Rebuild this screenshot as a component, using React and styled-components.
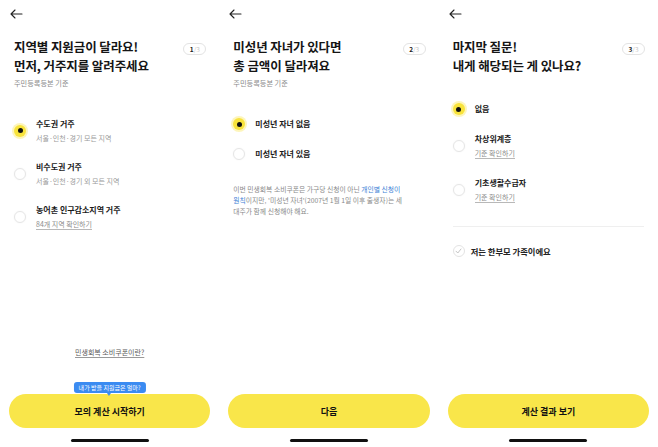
import React from "react";
import styled, { createGlobalStyle } from "styled-components";

const GlobalStyle = createGlobalStyle`
  body {
    margin: 0;
    background: #fff;
    font-family: "Noto Sans CJK KR", "Noto Sans", sans-serif;
    color: #151515;
  }
`;

const steps = [
  {
    step: 1,
    title: ["지역별 지원금이 달라요!", "먼저, 거주지를 알려주세요"],
    subtitle: "주민등록등본 기준",
    options: [
      { label: "수도권 거주", sub: "서울·인천·경기 모든 지역", checked: true },
      { label: "비수도권 거주", sub: "서울·인천·경기 외 모든 지역" },
      { label: "농어촌 인구감소지역 거주", sub: "84개 지역 확인하기", link: true },
    ],
    button: "모의 계산 시작하기",
  },
  {
    step: 2,
    title: ["미성년 자녀가 있다면", "총 금액이 달라져요"],
    subtitle: "주민등록등본 기준",
    options: [
      { label: "미성년 자녀 없음", checked: true },
      { label: "미성년 자녀 있음" },
    ],
    button: "다음",
  },
  {
    step: 3,
    title: ["마지막 질문!", "내게 해당되는 게 있나요?"],
    options: [
      { label: "없음", checked: true },
      { label: "차상위계층", sub: "기준 확인하기", link: true },
      { label: "기초생활수급자", sub: "기준 확인하기", link: true },
    ],
    button: "계산 결과 보기",
  },
];

const Screens = styled.main`
  display: grid;
  grid-template-columns: repeat(3, 1fr);
  width: 658px;
  height: 447px;
`;

const Panel = styled.section`
  display: flex;
  flex-direction: column;
  height: 447px;
  min-width: 0;
`;

const Header = styled.div`
  height: 28px;
  padding-left: 10px;
  display: flex;
  align-items: center;
`;

const TitleRow = styled.div`
  margin-top: 9px;
  padding: 0 13px 0 14px;
  display: flex;
  justify-content: space-between;
  align-items: flex-start;
`;

const Title = styled.h1`
  margin: 0;
  font-size: 12.5px;
  line-height: 19px;
  font-weight: 700;
  letter-spacing: -0.1px;
`;

const Badge = styled.div`
  margin-top: 6px;
  width: 23px;
  height: 12px;
  box-sizing: border-box;
  border: 1px solid #e3e3e3;
  border-radius: 6px;
  display: flex;
  align-items: center;
  justify-content: center;
  font-size: 6.5px;
  color: #222;
  font-weight: 700;

  span {
    color: #c8c8c8;
    font-weight: 400;
  }
`;

const Subtitle = styled.p`
  margin: 3px 0 0;
  padding-left: 14px;
  font-size: 7.2px;
  line-height: 10px;
  color: #8a8a8a;
`;

const OptionList = styled.div`
  margin-top: ${(p) => p.$top}px;
  padding-left: 14px;
  display: flex;
  flex-direction: column;
  gap: 18px;
`;

const Option = styled.div`
  display: flex;
  align-items: center;
  gap: 10px;
`;

const Radio = styled.span`
  width: 12px;
  height: 12px;
  border-radius: 50%;
  box-sizing: border-box;
  flex-shrink: 0;
  display: flex;
  align-items: center;
  justify-content: center;
  background: ${(p) => (p.$on ? "#f8e33c" : "#fff")};
  border: ${(p) => (p.$on ? "none" : "1px solid #e6e6e6")};
  box-shadow: ${(p) =>
    p.$on ? "0 0 0 2px rgba(248, 227, 60, 0.35)" : "0 0 2px rgba(0,0,0,0.05)"};

  &::after {
    content: "";
    display: ${(p) => (p.$on ? "block" : "none")};
    width: 5px;
    height: 5px;
    border-radius: 50%;
    background: #111;
  }
`;

const OptionText = styled.div`
  display: flex;
  flex-direction: column;
  align-items: flex-start;
`;

const Label = styled.span`
  font-size: 8px;
  line-height: 12px;
  font-weight: 700;
  color: #1a1a1a;
`;

const Sub = styled.span`
  margin-top: 3px;
  font-size: 7px;
  line-height: 10px;
  border-bottom: ${(p) => (p.$link ? "1px solid #b8b8b8" : "none")};
  color: ${(p) => (p.$link ? "#8c8c8c" : "#9a9a9a")};
`;

const Note = styled.p`
  margin: 24px 0 0;
  padding: 0 14px;
  font-size: 6.8px;
  line-height: 11px;
  color: #8a8a8a;
  white-space: nowrap;

  em {
    font-style: normal;
    color: #3d7fd6;
  }
`;

const Divider = styled.hr`
  margin: 23px 14px 0;
  border: none;
  height: 1px;
  background: #efefef;
`;

const CheckRow = styled.div`
  margin-top: 18px;
  padding-left: 14px;
  display: flex;
  align-items: center;
  gap: 6px;
  font-size: 8.3px;
  line-height: 12px;
  font-weight: 700;
  color: #222;
`;

const CheckCircle = styled.span`
  width: 12px;
  height: 12px;
  box-sizing: border-box;
  border: 1px solid #e3e3e3;
  border-radius: 50%;
  display: flex;
  align-items: center;
  justify-content: center;
`;

const Spacer = styled.div`
  flex: 1;
`;

const Footer = styled.div`
  display: flex;
  flex-direction: column;
  align-items: center;
  padding: 0 9px 5px;
`;

const InfoLink = styled.span`
  margin-bottom: 37px;
  font-size: 7px;
  line-height: 10px;
  color: #5a5a5a;
  text-decoration: underline;
  text-underline-offset: 1.5px;
  text-decoration-color: #999;
`;

const ButtonWrap = styled.div`
  position: relative;
  width: 100%;
`;

const Button = styled.button`
  width: 100%;
  height: 34px;
  border: none;
  border-radius: 17px;
  background: #f9e64a;
  font-family: inherit;
  font-size: 9px;
  font-weight: 700;
  color: #111;
  padding: 0;
`;

const Tooltip = styled.div`
  position: absolute;
  left: 50%;
  bottom: calc(100% + 1px);
  transform: translateX(-50%);
  height: 11px;
  padding: 0 5px;
  border-radius: 3px;
  background: #3b8bf1;
  color: #fff;
  font-size: 6px;
  line-height: 11px;
  white-space: nowrap;

  &::after {
    content: "";
    position: absolute;
    left: 50%;
    top: 100%;
    margin-left: -2.5px;
    border: 2.5px solid transparent;
    border-top: 3px solid #3b8bf1;
  }
`;

const HomeBar = styled.div`
  margin-top: 11px;
  width: 78px;
  height: 3px;
  border-radius: 2px;
  background: #111;
`;

const BackArrow = () => (
  <svg width="13" height="10" viewBox="0 0 13 10" fill="none">
    <path
      d="M12 5H1.2M5 1L1 5l4 4"
      stroke="#222"
      strokeWidth="1.1"
      strokeLinecap="round"
      strokeLinejoin="round"
    />
  </svg>
);

const Check = () => (
  <svg width="7" height="6" viewBox="0 0 7 6" fill="none">
    <path d="M1 3.2L2.8 5L6 1" stroke="#bdbdbd" strokeWidth="0.9" strokeLinecap="round" strokeLinejoin="round" />
  </svg>
);

const Step = ({ data }) => (
  <Panel>
    <Header>
      <BackArrow />
    </Header>
    <TitleRow>
      <Title>
        {data.title[0]}
        <br />
        {data.title[1]}
      </Title>
      <Badge>
        {data.step}
        <span>/3</span>
      </Badge>
    </TitleRow>
    {data.subtitle && <Subtitle>{data.subtitle}</Subtitle>}
    <OptionList $top={data.subtitle ? 30 : 28}>
      {data.options.map((o) => (
        <Option key={o.label}>
          <Radio $on={o.checked} />
          <OptionText>
            <Label>{o.label}</Label>
            {o.sub && <Sub $link={o.link}>{o.sub}</Sub>}
          </OptionText>
        </Option>
      ))}
    </OptionList>

    {data.step === 2 && (
      <Note>
        이번 민생회복 소비쿠폰은 가구당 신청이 아닌 <em>개인별 신청이</em>
        <br />
        <em>원칙</em>이지만, '미성년 자녀'(2007년 1월 1일 이후 출생자)는 세
        <br />
        대주가 함께 신청해야 해요.
      </Note>
    )}

    {data.step === 3 && (
      <>
        <Divider />
        <CheckRow>
          <CheckCircle>
            <Check />
          </CheckCircle>
          저는 한부모 가족이에요
        </CheckRow>
      </>
    )}

    <Spacer />
    <Footer>
      {data.step === 1 && <InfoLink>민생회복 소비쿠폰이란?</InfoLink>}
      <ButtonWrap>
        {data.step === 1 && <Tooltip>내가 받을 지원금은 얼마?</Tooltip>}
        <Button>{data.button}</Button>
      </ButtonWrap>
      <HomeBar />
    </Footer>
  </Panel>
);

export default function App() {
  return (
    <>
      <GlobalStyle />
      <Screens>
        {steps.map((s) => (
          <Step key={s.step} data={s} />
        ))}
      </Screens>
    </>
  );
}
